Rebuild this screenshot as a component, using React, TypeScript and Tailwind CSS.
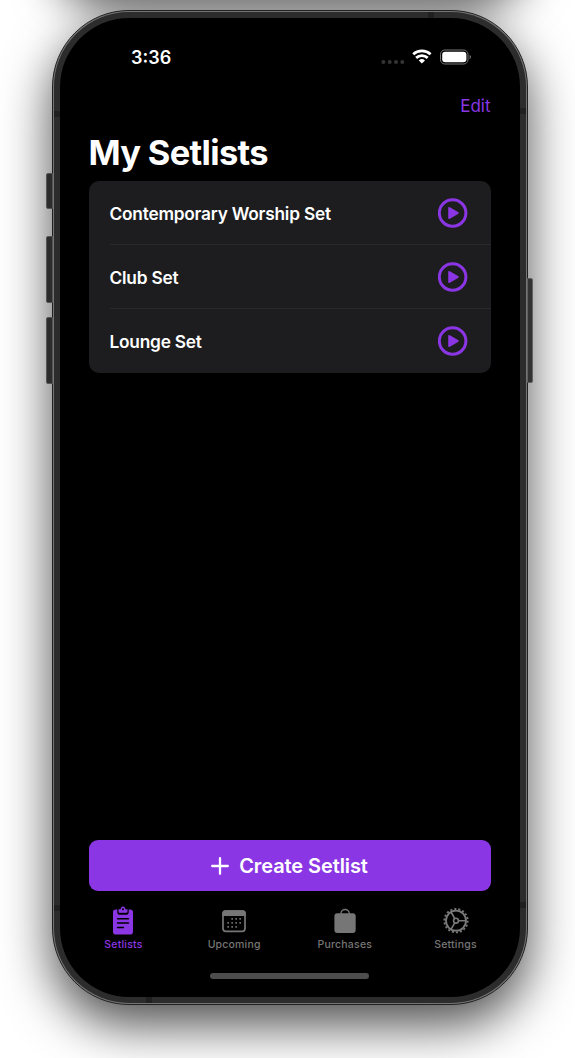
import React from "react";

const font = "font-[Inter,'Liberation_Sans',sans-serif]";

const Play = () => (
  <svg className="h-[30px] w-[30px]" viewBox="0 0 30 30" fill="none">
    <circle cx="14.6" cy="15" r="13.3" stroke="#8b36e4" strokeWidth="3" />
    <path d="M11 9.8v10.4l9-5.2z" fill="#8b36e4" stroke="#8b36e4" strokeWidth="1.6" strokeLinejoin="round" />
  </svg>
);

const Clipboard = () => (
  <svg className="h-[30px] w-6" viewBox="0 0 24 30">
    <rect x="2" y="3.5" width="20" height="25" rx="2.8" fill="#8b36e4" />
    <path d="M7.5 3.3h9v3.2a1 1 0 0 1-1 1h-7a1 1 0 0 1-1-1z" fill="#8b36e4" stroke="#000" strokeWidth="2.4" />
    <path d="M7.5 3.3H9.6C9.7 1.6 10.6.5 12 .5s2.3 1.1 2.4 2.8h2.1v2.5a.9.9 0 0 1-.9.9H8.4a.9.9 0 0 1-.9-.9z" fill="#8b36e4" />
    <circle cx="12" cy="3.2" r="1" fill="#000" />
    <path d="M6.5 12.7h11M6.5 17h11M6.5 21.5h6" stroke="#000" strokeWidth="1.4" strokeLinecap="round" />
  </svg>
);

const Calendar = () => (
  <svg className="h-[30px] w-6" viewBox="0 0 24 30" fill="none">
    <rect x="1" y="5" width="22" height="20.3" rx="2.8" stroke="#767676" strokeWidth="1.7" />
    <path d="M.2 10V7.3a3 3 0 0 1 3-3h17.6a3 3 0 0 1 3 3V10z" fill="#767676" />
    <g fill="#767676">
      {[[9.3, 12], [13.3, 12], [17.3, 12], [5.3, 16], [9.3, 16], [13.3, 16], [17.3, 16], [5.3, 20], [9.3, 20], [13.3, 20]].map(([x, y]) => (
        <rect key={`${x}-${y}`} x={x} y={y} width="1.7" height="1.7" rx=".4" />
      ))}
    </g>
  </svg>
);

const Bag = () => (
  <svg className="h-[30px] w-6" viewBox="0 0 24 30" fill="none">
    <rect x="1.4" y="7.3" width="21.3" height="19.6" rx="3" fill="#767676" />
    <path d="M7.9 8.5V7.7a4.2 4.2 0 0 1 8.4 0v.8" stroke="#767676" strokeWidth="1.4" />
  </svg>
);

const Gear = () => (
  <svg className="h-[30px] w-[26px]" viewBox="0 0 26 30" fill="none" stroke="#7a7a7a">
    <circle cx="13" cy="14.7" r="10" strokeWidth="1.8" />
    <circle cx="13" cy="14.7" r="11.7" strokeWidth="1.8" strokeDasharray="2.04 2.04" />
    <circle cx="13" cy="14.7" r="2.4" strokeWidth="1.6" />
    <path d="M15.4 14.7H23M11.8 12.6 8 6M11.8 16.8 8 23.4" strokeWidth="1.6" />
  </svg>
);

const tabs = [
  { name: "Setlists", icon: <Clipboard />, color: "text-[#8b36e4]" },
  { name: "Upcoming", icon: <Calendar />, color: "text-[#767676]" },
  { name: "Purchases", icon: <Bag />, color: "text-[#767676]" },
  { name: "Settings", icon: <Gear />, color: "text-[#767676]" },
];

const sets = ["Contemporary Worship Set", "Club Set", "Lounge Set"];

export default function App() {
  return (
    <div className={`relative h-[1058px] w-[575px] overflow-hidden bg-white pl-[52px] pt-[10px] ${font}`}>
      <div className="absolute -top-[200px] left-[52px] h-[188px] w-[476px] rounded-b-[60px] shadow-[0_20px_46px_rgba(0,0,0,0.66)]" />

      <div className="relative h-[995px] w-[476px] rounded-[77px] border border-[#202020] bg-[#747474] p-px shadow-[0_20px_50px_rgba(0,0,0,0.7)]">
        <div className="absolute -left-[7px] top-[162px] h-[36px] w-[7px] rounded-l-[2px] border border-[#555] bg-[#2c2c2c]" />
        <div className="absolute -left-[7px] top-[225px] h-[67px] w-[7px] rounded-l-[2px] border border-[#555] bg-[#2c2c2c]" />
        <div className="absolute -left-[7px] top-[306px] h-[67px] w-[7px] rounded-l-[2px] border border-[#555] bg-[#2c2c2c]" />
        <div className="absolute -right-[6px] top-[267px] h-[105px] w-[6px] rounded-r-[2px] border border-[#606060] bg-[#333333]" />
        <div className="relative h-full rounded-[75px] bg-[#2c2c2c] p-[6px]">
          <div className="absolute left-0 top-[99px] h-[6px] w-[6px] bg-[#202020]" />
          <div className="absolute right-0 top-[96px] h-[6px] w-[6px] bg-[#202020]" />
          <div className="absolute left-0 top-[893px] h-[6px] w-[6px] bg-[#202020]" />
          <div className="absolute right-0 top-[890px] h-[6px] w-[6px] bg-[#202020]" />
          <div className="absolute left-[374px] top-0 h-[6px] w-[6px] bg-[#202020]" />
          <div className="absolute bottom-0 left-[92px] h-[6px] w-[6px] bg-[#202020]" />
          <div className="flex h-full flex-col rounded-[69px] bg-black pl-[28.5px] pr-[29.5px]">
            <div className="flex h-[79px] shrink-0 items-center pl-[42.5px] pr-[19.5px] text-white">
              <span className="text-[18px] font-semibold leading-none">3:36</span>
              <div className="ml-auto flex items-center pb-[2px]">
                <svg className="h-4 w-[90px]" viewBox="0 0 90 16" fill="none">
                  <g fill="#343434">
                    <circle cx="2.4" cy="13" r="2" /><circle cx="8.7" cy="13" r="2" /><circle cx="15" cy="13" r="2" /><circle cx="21.3" cy="13" r="2" />
                  </g>
                  <path d="M32.2 5.2a13 13 0 0 1 17.4 0M35.1 8.9a8.8 8.8 0 0 1 11.6 0" stroke="#fff" strokeWidth="2.8" />
                  <path d="m37.8 11.4 3.1 3.1 3.1-3.1a4.8 4.8 0 0 0-6.2 0z" fill="#fff" />
                  <rect x="59.5" y="1" width="27.5" height="14" rx="4.3" stroke="#777" />
                  <rect x="61.2" y="2.7" width="24.2" height="10.6" rx="3" fill="#fff" />
                  <path d="M88.6 5.8q1.4.7 1.4 2.2t-1.4 2.2z" fill="#777" />
                </svg>
              </div>
            </div>
            <div className="flex h-[20px] shrink-0 items-center justify-end text-[17px] text-[#8b36e4]">Edit</div>
            <h1 className="mt-[14px] h-[50px] shrink-0 text-[34.5px] font-bold leading-[43px] tracking-[-0.7px] text-white">My Setlists</h1>
            <div className="h-[192px] shrink-0 rounded-[10px] bg-[#1d1d1f] pl-[21px]">
              {sets.map((s, i) => (
                <div key={s} className={`flex h-16 items-center justify-between border-b pr-[23px] text-[17.3px] font-[560] text-white ${i < 2 ? "border-[#29292b]" : "border-transparent"}`}>
                  <span className="pt-[3px] tracking-[-0.22px]">{s}</span><Play />
                </div>
              ))}
            </div>
            <button className="mt-auto flex h-[51px] shrink-0 items-center justify-center gap-[10px] rounded-[9px] bg-[#8b36e4] text-[20px] font-[560] tracking-[-0.1px] text-white">
              <svg className="h-[18px] w-[18px]" viewBox="0 0 18 18"><path d="M9 1.2v15.6M1.2 9h15.6" stroke="#fff" strokeWidth="2.3" strokeLinecap="round" /></svg>
              <span>Create Setlist</span>
            </button>
            <nav className="-mx-[21px] mt-[15px] flex h-[60px] shrink-0 justify-center">
              {tabs.map((t) => (
                <div key={t.name} className={`flex w-[110.7px] flex-col items-center text-[10.5px] font-medium leading-3 tracking-[0.2px] ${t.color}`}>
                  {t.icon}<span className="mt-[3px]">{t.name}</span>
                </div>
              ))}
            </nav>
            <div className="mx-auto mb-[18px] mt-[7px] h-[6px] w-[159px] shrink-0 rounded-full bg-[#4d4d4d]" />
          </div>
        </div>
      </div>
    </div>
  );
}
